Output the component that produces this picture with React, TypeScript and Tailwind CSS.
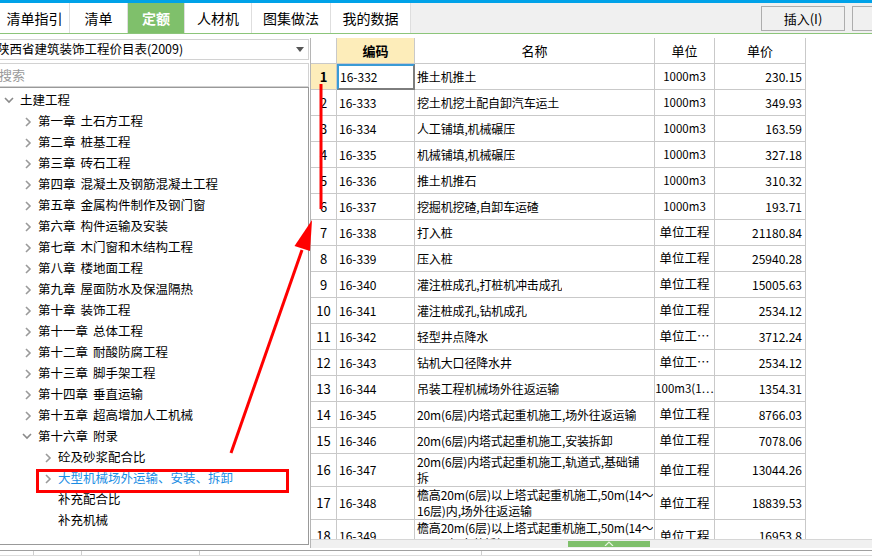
import React from "react"

// 定额库左侧目录
const tree = [
  { label: "土建工程", level: 0, mark: "down" },
  { label: "第一章 土石方工程", level: 1, mark: "right" },
  { label: "第二章 桩基工程", level: 1, mark: "right" },
  { label: "第三章 砖石工程", level: 1, mark: "right" },
  { label: "第四章 混凝土及钢筋混凝土工程", level: 1, mark: "right" },
  { label: "第五章 金属构件制作及钢门窗", level: 1, mark: "right" },
  { label: "第六章 构件运输及安装", level: 1, mark: "right" },
  { label: "第七章 木门窗和木结构工程", level: 1, mark: "right" },
  { label: "第八章 楼地面工程", level: 1, mark: "right" },
  { label: "第九章 屋面防水及保温隔热", level: 1, mark: "right" },
  { label: "第十章 装饰工程", level: 1, mark: "right" },
  { label: "第十一章 总体工程", level: 1, mark: "right" },
  { label: "第十二章 耐酸防腐工程", level: 1, mark: "right" },
  { label: "第十三章 脚手架工程", level: 1, mark: "right" },
  { label: "第十四章 垂直运输", level: 1, mark: "right" },
  { label: "第十五章 超高增加人工机械", level: 1, mark: "right" },
  { label: "第十六章 附录", level: 1, mark: "down" },
  { label: "砼及砂浆配合比", level: 2, mark: "right" },
  { label: "大型机械场外运输、安装、拆卸", level: 2, mark: "right", active: true },
  { label: "补充配合比", level: 2, mark: "" },
  { label: "补充机械", level: 2, mark: "" },
]

const rows = [
  { no: 1, code: "16-332", name: ["推土机推土"], unit: "1000m3", price: "230.15" },
  { no: 2, code: "16-333", name: ["挖土机挖土配自卸汽车运土"], unit: "1000m3", price: "349.93" },
  { no: 3, code: "16-334", name: ["人工铺填,机械碾压"], unit: "1000m3", price: "163.59" },
  { no: 4, code: "16-335", name: ["机械铺填,机械碾压"], unit: "1000m3", price: "327.18" },
  { no: 5, code: "16-336", name: ["推土机推石"], unit: "1000m3", price: "310.32" },
  { no: 6, code: "16-337", name: ["挖掘机挖碴,自卸车运碴"], unit: "1000m3", price: "193.71" },
  { no: 7, code: "16-338", name: ["打入桩"], unit: "单位工程", price: "21180.84" },
  { no: 8, code: "16-339", name: ["压入桩"], unit: "单位工程", price: "25940.28" },
  { no: 9, code: "16-340", name: ["灌注桩成孔,打桩机冲击成孔"], unit: "单位工程", price: "15005.63" },
  { no: 10, code: "16-341", name: ["灌注桩成孔,钻机成孔"], unit: "单位工程", price: "2534.12" },
  { no: 11, code: "16-342", name: ["轻型井点降水"], unit: "单位工…", price: "3712.24" },
  { no: 12, code: "16-343", name: ["钻机大口径降水井"], unit: "单位工…", price: "2534.12" },
  { no: 13, code: "16-344", name: ["吊装工程机械场外往返运输"], unit: "100m3(1…", price: "1354.31" },
  { no: 14, code: "16-345", name: ["20m(6层)内塔式起重机施工,场外往返运输"], unit: "单位工程", price: "8766.03" },
  { no: 15, code: "16-346", name: ["20m(6层)内塔式起重机施工,安装拆卸"], unit: "单位工程", price: "7078.06" },
  { no: 16, code: "16-347", name: ["20m(6层)内塔式起重机施工,轨道式,基础铺", "拆"], unit: "单位工程", price: "13044.26" },
  { no: 17, code: "16-348", name: ["檐高20m(6层)以上塔式起重机施工,50m(14～", "16层)内,场外往返运输"], unit: "单位工程", price: "18839.53" },
  { no: 18, code: "16-349", name: ["檐高20m(6层)以上塔式起重机施工,50m(14～", "16层)内,安装拆卸"], unit: "单位工程", price: "16953.8" },
]

const tabs = [
  { label: "清单指引", w: "w-[70px]" },
  { label: "清单", w: "w-[58px]" },
  { label: "定额", w: "w-[57px]", on: true },
  { label: "人材机", w: "w-[67px]" },
  { label: "图集做法", w: "w-[79px]" },
  { label: "我的数据", w: "w-[80px]" },
]

function Chevron({ mark }: { mark: string }) {
  if (mark === "down") {
    return (
      <svg width="10" height="7" viewBox="0 0 10 7" className="ml-[2px]">
        <polyline points="1,1 5,5 9,1" fill="none" stroke="#8a8a8a" strokeWidth="1.6" />
      </svg>
    )
  }
  if (mark === "right") {
    return (
      <svg width="7" height="10" viewBox="0 0 7 10" className="ml-[5px]">
        <polyline points="1,1 5,5 1,9" fill="none" stroke="#9a9a9a" strokeWidth="1.6" />
      </svg>
    )
  }
  return null
}

const cell = "border-r border-b border-[#c9c9c9] flex items-center"

export default function App() {
  return (
    <div className="relative w-[872px] h-[558px] overflow-hidden bg-white text-black font-['Noto_Sans_CJK_SC','Noto_Sans',sans-serif] text-[12px]">
      <div className="h-[3px] bg-[#00a2e8]" />

      {/* 顶部页签 */}
      <div className="h-[31px] flex bg-[#f0f0f0] border-b border-[#8cc57a]">
        {tabs.map((t) => (
          <div
            key={t.label}
            className={`${t.w} h-full flex items-center justify-center border-r border-[#dedede] text-[14px] ${
              t.on ? "bg-[#7fc06b] text-white font-bold" : "bg-white"
            }`}
          >
            {t.label}
          </div>
        ))}
        <div className="flex-1" />
        <div className="mt-[3px] h-[25px] w-[84px] border border-[#adadad] flex items-center justify-center text-[13px]">
          插入(I)
        </div>
        <div className="mt-[3px] ml-[7px] h-[25px] w-[20px] border border-r-0 border-[#adadad]" />
      </div>

      <div className="h-[4px]" />

      <div className="h-[510px] flex">
        {/* 左侧目录 */}
        <div className="w-[309px] flex flex-col">
          <div className="mt-[1px] h-[21px] border border-l-0 border-[#d2d2d2] flex items-center justify-between pr-[4px]">
            <span className="-ml-[3px] whitespace-nowrap text-[12.5px]">陕西省建筑装饰工程价目表(2009)</span>
            <svg width="8" height="5" viewBox="0 0 8 5">
              <polygon points="0,0 8,0 4,5" fill="#555" />
            </svg>
          </div>
          <div className="mt-[3px] h-[24px] border border-l-0 border-[#d2d2d2] flex items-center text-[13px] text-[#9a9a9a]">
            <span className="-ml-[1px]">搜索</span>
          </div>
          <div className="flex-1 mb-[3px] border-t border-r border-b border-[#999] pt-[2px]">
            {tree.map((n) => {
              const [head, ...rest] = n.label.split(" ")
              return (
                <div
                  key={n.label}
                  className={`h-[21px] flex items-center whitespace-nowrap text-[12.5px] ${n.active ? "text-[#1a8de4]" : ""} ${
                    n.level === 0 ? "pl-[2px]" : n.level === 1 ? "pl-[20px]" : "pl-[40px]"
                  }`}
                >
                  <div className="w-[18px] flex items-center">
                    <Chevron mark={n.mark} />
                  </div>
                  <span>{head}</span>
                  {rest.length > 0 && <span className="ml-[5px]">{rest.join(" ")}</span>}
                </div>
              )
            })}
          </div>
        </div>

        {/* 右侧定额表 */}
        <div className="flex-1 flex flex-col border-l border-[#b5b5b5] ml-[1px]">
          <div className="h-[26px] flex shrink-0">
            <div className={`${cell} w-[26px]`} />
            <div className={`${cell} w-[78px] justify-center bg-[#fdedba] font-bold text-[13px]`}>编码</div>
            <div className={`${cell} w-[240px] justify-center text-[13px]`}>名称</div>
            <div className={`${cell} w-[60px] justify-center text-[13px]`}>单位</div>
            <div className={`${cell} w-[91px] justify-center text-[13px]`}>单价</div>
          </div>
          <div className="flex-1 overflow-hidden">
            {rows.map((r) => (
              <div
                key={r.no}
                className={`flex shrink-0 ${r.name.length > 1 ? "h-[33px]" : "h-[26px]"}`}
              >
                <div
                  className={`${cell} w-[26px] justify-center text-[13px] ${
                    r.no === 1 ? "bg-[#fdedba] font-bold" : ""
                  }`}
                >
                  {r.no}
                </div>
                {r.no === 1 ? (
                  <div className="w-[78px] flex items-center pl-[1px] border-2 border-t-[#3a9bd6] border-l-[#3a9bd6] border-r-[#7d7d7d] border-b-[#7d7d7d]">
                    {r.code}
                  </div>
                ) : (
                  <div className={`${cell} w-[78px] pl-[2px]`}>{r.code}</div>
                )}
                <div className={`${cell} w-[240px] pl-[2px] text-[12px] tracking-[-0.15px]`}>
                  <div className="leading-[16px] whitespace-nowrap overflow-hidden">
                    {r.name.map((line) => (
                      <div key={line}>{line}</div>
                    ))}
                  </div>
                </div>
                <div
                  className={`${cell} w-[60px] justify-center whitespace-nowrap overflow-hidden ${
                    r.unit.startsWith("1") ? "text-[11.5px]" : "text-[12.5px]"
                  }`}
                >
                  {r.unit}
                </div>
                <div className={`${cell} w-[91px] justify-end pr-[3px]`}>{r.price}</div>
              </div>
            ))}
          </div>
          <div className="h-[9px] shrink-0 bg-[#f0f0f0] border-t border-[#d6d6d6] relative">
            <div className="absolute left-[257px] top-[1px] w-[82px] h-[6px] bg-[#7fc06b] flex justify-center">
              <svg width="10" height="5" viewBox="0 0 10 5">
                <polyline points="1,5 5,1 9,5" fill="none" stroke="#e8f5e0" strokeWidth="1.2" />
              </svg>
            </div>
          </div>
        </div>
      </div>

      {/* 底部状态栏 */}
      <div className="h-[10px] pt-[2px]">
        <div className="h-[6px] border-t border-b border-t-[#a0a0a0] border-b-[#dcdcdc] flex">
          <div className="w-[34px] border-r border-[#cfcfcf]" />
          <div className="w-[48px] border-r border-[#cfcfcf]" />
          <div className="w-[118px] border-r border-[#cfcfcf]" />
          <div className="w-[282px] border-r border-[#cfcfcf]" />
        </div>
      </div>

      {/* 红色标注 */}
      <svg className="absolute left-0 top-0 pointer-events-none" width="872" height="558" viewBox="0 0 872 558">
        <rect x="37.5" y="470.5" width="250" height="21" fill="none" stroke="#ff0000" strokeWidth="3" />
        <line x1="321" y1="84" x2="321" y2="209" stroke="#ff0000" strokeWidth="3" />
        <line x1="231" y1="453" x2="302" y2="250" stroke="#ff0000" strokeWidth="3" />
        <polygon points="312,220 310,251 294.5,246" fill="#ff0000" />
      </svg>
    </div>
  )
}
